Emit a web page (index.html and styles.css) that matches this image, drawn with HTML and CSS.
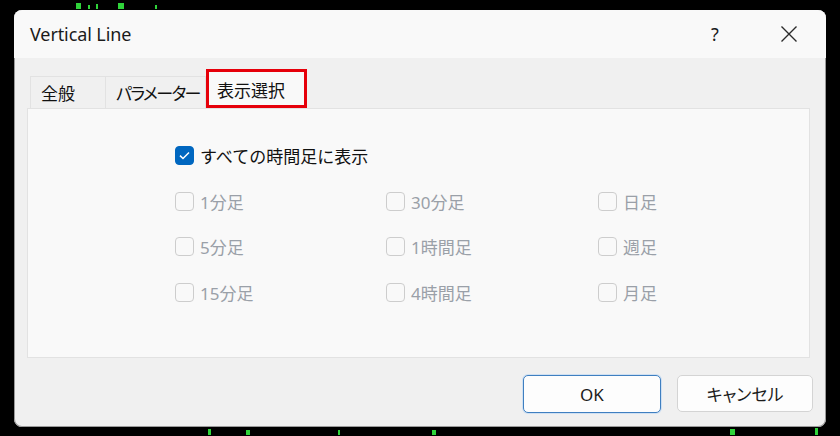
FILE: index.html
```html
<!DOCTYPE html>
<html lang="ja">
<head>
<meta charset="utf-8">
<title>Vertical Line</title>
<link rel="stylesheet" href="styles.css">
</head>
<body>
<div class="chart">
  <span class="tick t1"></span><span class="tick t2"></span><span class="tick t3"></span><span class="tick t4"></span><span class="tick t5"></span>
  <span class="tick b1"></span><span class="tick b2"></span><span class="tick b3"></span><span class="tick b4"></span><span class="tick b5"></span><span class="tick b6"></span>
</div>
<div class="dialog">
  <div class="titlebar">
    <span class="title">Vertical Line</span>
    <span class="help">?</span>
    <svg class="close" width="18" height="18" viewBox="0 0 18 18"><path d="M1.5 1.5L16.5 16.5M16.5 1.5L1.5 16.5" stroke="#2b2b2b" stroke-width="1.4" fill="none"/></svg>
  </div>
  <div class="content">
    <div class="tabs">
      <div class="tab">全般</div>
      <div class="tab narrow">パラメーター</div>
      <div class="tab selected">表示選択</div>
    </div>
    <div class="panel">
      <div class="grid">
        <label class="item all"><span class="box checked"><svg width="11" height="9" viewBox="0 0 11 9"><path d="M1 4.6L4 7.5L10 1.5" stroke="#fff" stroke-width="1.5" fill="none"/></svg></span><span>すべての時間足に表示</span></label>
        <label class="item off"><span class="box"></span><span>1分足</span></label>
        <label class="item off"><span class="box"></span><span>30分足</span></label>
        <label class="item off"><span class="box"></span><span>日足</span></label>
        <label class="item off"><span class="box"></span><span>5分足</span></label>
        <label class="item off"><span class="box"></span><span>1時間足</span></label>
        <label class="item off"><span class="box"></span><span>週足</span></label>
        <label class="item off"><span class="box"></span><span>15分足</span></label>
        <label class="item off"><span class="box"></span><span>4時間足</span></label>
        <label class="item off"><span class="box"></span><span>月足</span></label>
      </div>
    </div>
    <div class="footer">
      <button class="btn primary">OK</button>
      <button class="btn cancel">キャンセル</button>
    </div>
  </div>
</div>
</body>
</html>
```

FILE: styles.css
```css
html, body {
  margin: 0;
  padding: 0;
  background: #000;
  width: 840px;
  height: 436px;
  overflow: hidden;
  font-family: "Noto Sans", "Noto Sans CJK JP", sans-serif;
  color: #1b1b1b;
}
body {
  padding: 10px 0 0 14px;
  box-sizing: border-box;
}
.chart {
  position: absolute;
  inset: 0;
}
.tick {
  position: absolute;
  background: #2fd33a;
  width: 2px;
}
.t1 { left: 76px; top: 3px; width: 5px; height: 6px; }
.t2 { left: 88px; top: 5px; height: 4px; }
.t3 { left: 96px; top: 4px; height: 5px; }
.t4 { left: 118px; top: 3px; width: 6px; height: 6px; }
.t5 { left: 155px; top: 5px; height: 4px; }
.b1 { left: 208px; top: 429px; height: 6px; width: 3px; }
.b2 { left: 246px; top: 430px; height: 5px; width: 4px; }
.b3 { left: 338px; top: 430px; height: 5px; }
.b4 { left: 432px; top: 430px; height: 5px; width: 4px; }
.b5 { left: 730px; top: 429px; height: 6px; width: 5px; }
.b6 { left: 815px; top: 428px; height: 7px; width: 3px; }

.dialog {
  position: relative;
  width: 812px;
  height: 417px;
  background: #f0f0f0;
  border-radius: 8px;
  overflow: hidden;
  box-shadow: inset 0 0 0 1px #9a9a9a;
}
.titlebar {
  height: 48px;
  background: #f9f9f9;
  display: flex;
  align-items: center;
  padding: 0 0 0 16px;
}
.title {
  font-size: 18px;
  letter-spacing: -0.1px;
  flex: 1;
}
.help {
  font-size: 18px;
  width: 69px;
  text-align: left;
  margin-top: -1px;
}
.close {
  margin-right: 28px;
  margin-top: -1px;
}
.content {
  padding: 11px 16px 0 13px;
}
.tabs {
  display: flex;
  align-items: flex-end;
  height: 39px;
  padding-left: 3px;
  font-family: "Noto Sans CJK JP", sans-serif;
  font-size: 17px;
  color: #111;
}
.tab {
  height: 32px;
  box-sizing: border-box;
  padding: 0 0 0 10px;
  display: flex;
  align-items: center;
  border: 1px solid #e2e2e2;
  border-bottom: none;
  background: #f0f0f0;
  white-space: nowrap;
}
.tab:first-child { width: 76px; }
.tab.narrow {
  width: 100px;
  border-left: none;
  font-feature-settings: "palt" 1;
  letter-spacing: -1.6px;
}
.tab.selected {
  width: 101px;
  height: 39px;
  border: 3px solid #e6000a;
  padding-left: 8px;
  padding-top: 1px;
  background: #f9f9f9;
}
.panel {
  height: 250px;
  box-sizing: border-box;
  background: #f9f9f9;
  border: 1px solid #e2e2e2;
  padding: 24px 0 0 147px;
}
.grid {
  display: grid;
  grid-template-columns: 211px 212px 160px;
  grid-auto-rows: 45.5px;
  font-family: "Noto Sans", "Noto Sans CJK JP", sans-serif;
  font-size: 17px;
}
.item {
  display: flex;
  align-items: center;
  gap: 6px;
}
.item.all {
  grid-column: 1 / -1;
  color: #111;
}
.item.off {
  color: #9aa0a8;
}
.box {
  width: 19px;
  height: 19px;
  box-sizing: border-box;
  border: 1px solid #cdcdcd;
  border-radius: 4px;
  background: #f9f9f9;
  display: flex;
  align-items: center;
  justify-content: center;
  flex: none;
}
.box.checked {
  background: #0067c0;
  border-color: #0067c0;
}
.footer {
  display: flex;
  justify-content: flex-end;
  gap: 16px;
  padding: 17px 0 0 0;
  margin-right: -3px;
}
.btn {
  width: 138px;
  height: 38px;
  border-radius: 5px;
  border: 1px solid #d4d4d4;
  background: #fdfdfd;
  font-family: "Noto Sans", "Noto Sans CJK JP", sans-serif;
  font-size: 17px;
  color: #1b1b1b;
  padding: 0;
}
.btn.primary {
  border: 1.5px solid #3f7fc0;
  box-shadow: 0 0 0 1px #cfe0f2;
}
.btn.cancel {
  width: 136px;
  height: 37px;
  font-feature-settings: "palt" 1;
}
```
